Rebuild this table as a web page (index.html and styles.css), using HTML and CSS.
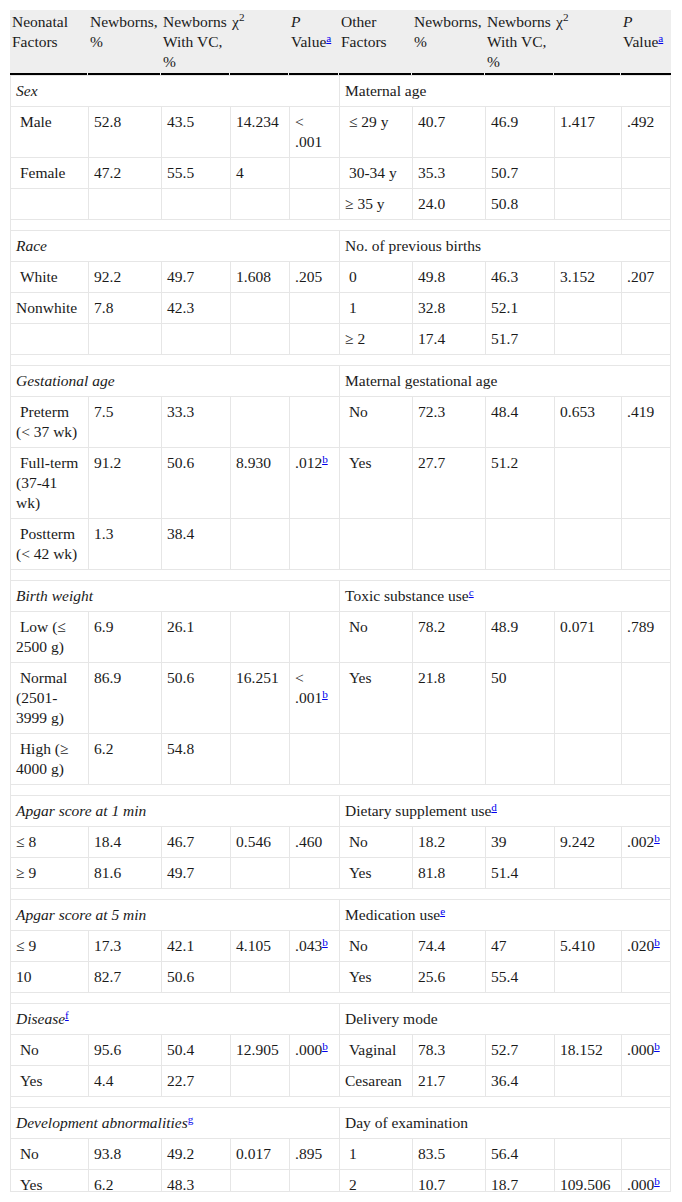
FILE: index.html
```html
<!DOCTYPE html>
<html lang="en">
<head>
<meta charset="utf-8">
<title>Neonatal and other factors</title>
<link rel="stylesheet" href="styles.css">
</head>
<body>
<div class="wrap">
<table class="tbl">
<colgroup>
<col class="w78"><col class="w73"><col class="w69"><col class="w59"><col class="w50">
<col class="w73"><col class="w73"><col class="w69"><col class="w67"><col class="w50">
</colgroup>
<thead>
<tr>
<th>Neonatal Factors</th><th>Newborns, %</th><th>Newborns With VC, %</th><th>χ<sup class="num">2</sup></th><th><i>P</i> Value<sup><a href="#">a</a></sup></th>
<th>Other Factors</th><th>Newborns, %</th><th>Newborns With VC, %</th><th>χ<sup class="num">2</sup></th><th class="last"><i>P</i> Value<sup><a href="#">a</a></sup></th>
</tr>
</thead>
<tbody>
<tr><td colspan="5" class="grp">Sex</td><td colspan="5" class="last">Maternal age</td></tr>
<tr><td>&nbsp;Male</td><td>52.8</td><td>43.5</td><td>14.234</td><td>&lt;<br>.001</td><td>&nbsp;≤ 29 y</td><td>40.7</td><td>46.9</td><td>1.417</td><td class="last">.492</td></tr>
<tr><td>&nbsp;Female</td><td>47.2</td><td>55.5</td><td>4</td><td></td><td>&nbsp;30-34 y</td><td>35.3</td><td>50.7</td><td></td><td class="last"></td></tr>
<tr><td></td><td></td><td></td><td></td><td></td><td>≥ 35 y</td><td>24.0</td><td>50.8</td><td></td><td class="last"></td></tr>
<tr><td colspan="10" class="last"></td></tr>

<tr><td colspan="5" class="grp">Race</td><td colspan="5" class="last">No. of previous births</td></tr>
<tr><td>&nbsp;White</td><td>92.2</td><td>49.7</td><td>1.608</td><td>.205</td><td>&nbsp;0</td><td>49.8</td><td>46.3</td><td>3.152</td><td class="last">.207</td></tr>
<tr><td>Nonwhite</td><td>7.8</td><td>42.3</td><td></td><td></td><td>&nbsp;1</td><td>32.8</td><td>52.1</td><td></td><td class="last"></td></tr>
<tr><td></td><td></td><td></td><td></td><td></td><td>≥ 2</td><td>17.4</td><td>51.7</td><td></td><td class="last"></td></tr>
<tr><td colspan="10" class="last"></td></tr>

<tr><td colspan="5" class="grp">Gestational age</td><td colspan="5" class="last">Maternal gestational age</td></tr>
<tr><td>&nbsp;Preterm (&lt; 37 wk)</td><td>7.5</td><td>33.3</td><td></td><td></td><td>&nbsp;No</td><td>72.3</td><td>48.4</td><td>0.653</td><td class="last">.419</td></tr>
<tr><td>&nbsp;Full-term (37-41 wk)</td><td>91.2</td><td>50.6</td><td>8.930</td><td>.012<sup><a href="#">b</a></sup></td><td>&nbsp;Yes</td><td>27.7</td><td>51.2</td><td></td><td class="last"></td></tr>
<tr><td>&nbsp;Postterm (&lt; 42 wk)</td><td>1.3</td><td>38.4</td><td></td><td></td><td></td><td></td><td></td><td></td><td class="last"></td></tr>
<tr><td colspan="10" class="last"></td></tr>

<tr><td colspan="5" class="grp">Birth weight</td><td colspan="5" class="last">Toxic substance use<sup><a href="#">c</a></sup></td></tr>
<tr><td>&nbsp;Low (≤ 2500 g)</td><td>6.9</td><td>26.1</td><td></td><td></td><td>&nbsp;No</td><td>78.2</td><td>48.9</td><td>0.071</td><td class="last">.789</td></tr>
<tr><td>&nbsp;Normal (2501-3999 g)</td><td>86.9</td><td>50.6</td><td>16.251</td><td>&lt;<br>.001<sup><a href="#">b</a></sup></td><td>&nbsp;Yes</td><td>21.8</td><td>50</td><td></td><td class="last"></td></tr>
<tr><td>&nbsp;High (≥ 4000 g)</td><td>6.2</td><td>54.8</td><td></td><td></td><td></td><td></td><td></td><td></td><td class="last"></td></tr>
<tr><td colspan="10" class="last"></td></tr>

<tr><td colspan="5" class="grp">Apgar score at 1 min</td><td colspan="5" class="last">Dietary supplement use<sup><a href="#">d</a></sup></td></tr>
<tr><td>≤ 8</td><td>18.4</td><td>46.7</td><td>0.546</td><td>.460</td><td>&nbsp;No</td><td>18.2</td><td>39</td><td>9.242</td><td class="last">.002<sup><a href="#">b</a></sup></td></tr>
<tr><td>≥ 9</td><td>81.6</td><td>49.7</td><td></td><td></td><td>&nbsp;Yes</td><td>81.8</td><td>51.4</td><td></td><td class="last"></td></tr>
<tr><td colspan="10" class="last"></td></tr>

<tr><td colspan="5" class="grp">Apgar score at 5 min</td><td colspan="5" class="last">Medication use<sup><a href="#">e</a></sup></td></tr>
<tr><td>≤ 9</td><td>17.3</td><td>42.1</td><td>4.105</td><td>.043<sup><a href="#">b</a></sup></td><td>&nbsp;No</td><td>74.4</td><td>47</td><td>5.410</td><td class="last">.020<sup><a href="#">b</a></sup></td></tr>
<tr><td>10</td><td>82.7</td><td>50.6</td><td></td><td></td><td>&nbsp;Yes</td><td>25.6</td><td>55.4</td><td></td><td class="last"></td></tr>
<tr><td colspan="10" class="last"></td></tr>

<tr><td colspan="5" class="grp">Disease<sup><a href="#">f</a></sup></td><td colspan="5" class="last">Delivery mode</td></tr>
<tr><td>&nbsp;No</td><td>95.6</td><td>50.4</td><td>12.905</td><td>.000<sup><a href="#">b</a></sup></td><td>&nbsp;Vaginal</td><td>78.3</td><td>52.7</td><td>18.152</td><td class="last">.000<sup><a href="#">b</a></sup></td></tr>
<tr><td>&nbsp;Yes</td><td>4.4</td><td>22.7</td><td></td><td></td><td>Cesarean</td><td>21.7</td><td>36.4</td><td></td><td class="last"></td></tr>
<tr><td colspan="10" class="last"></td></tr>

<tr><td colspan="5" class="grp">Development abnormalities<sup><a href="#">g</a></sup></td><td colspan="5" class="last">Day of examination</td></tr>
<tr><td>&nbsp;No</td><td>93.8</td><td>49.2</td><td>0.017</td><td>.895</td><td>&nbsp;1</td><td>83.5</td><td>56.4</td><td></td><td class="last"></td></tr>
<tr><td>&nbsp;Yes</td><td>6.2</td><td>48.3</td><td></td><td></td><td>&nbsp;2</td><td>10.7</td><td>18.7</td><td>109.506</td><td class="last">.000<sup><a href="#">b</a></sup></td></tr>
</tbody>
</table>
</div>
</body>
</html>
```

FILE: styles.css
```css
html, body {
  margin: 0;
  padding: 0;
  background: #ffffff;
}

body {
  font-family: "Liberation Serif", "Times New Roman", serif;
  font-size: 15.5px;
  line-height: 20px;
  color: #1a1a1a;
}

.wrap {
  margin: 10px 11px 0 10px;
  height: 1181px;
  overflow: hidden;
  border-bottom: 1px solid #e6e6e6;
}

.tbl {
  width: 661px;
  table-layout: fixed;
  border-collapse: separate;
  border-spacing: 0;
}

.w78 { width: 78px; }
.w73 { width: 73px; }
.w69 { width: 69px; }
.w67 { width: 67px; }
.w59 { width: 59px; }
.w50 { width: 50px; }

.tbl th {
  font-weight: normal;
  text-align: left;
  vertical-align: top;
  padding: 2px 2px 1px 2px;
  background-color: #eeeeee;
  background-image: linear-gradient(#000000, #000000);
  background-repeat: no-repeat;
  background-size: calc(100% - 1px) 2px;
  background-position: left bottom;
  border-bottom: 2px solid transparent;
  background-clip: border-box;
  background-origin: border-box;
}

.tbl th.last {
  background-size: 100% 2px;
}

.tbl td {
  vertical-align: top;
  text-align: left;
  padding: 5px;
  border-top: 1px solid #e6e6e6;
  border-left: 1px solid #e6e6e6;
}

.tbl td.last {
  border-right: 1px solid #e6e6e6;
}

.tbl td.grp {
  font-style: italic;
}

sup {
  font-size: 0.72em;
  line-height: 0;
  vertical-align: 0.45em;
}

sup a {
  color: #0000ee;
  text-decoration: underline;
  font-style: normal;
}

.grp sup a {
  font-style: normal;
}

sup.num {
  vertical-align: 0.5em;
}
```
